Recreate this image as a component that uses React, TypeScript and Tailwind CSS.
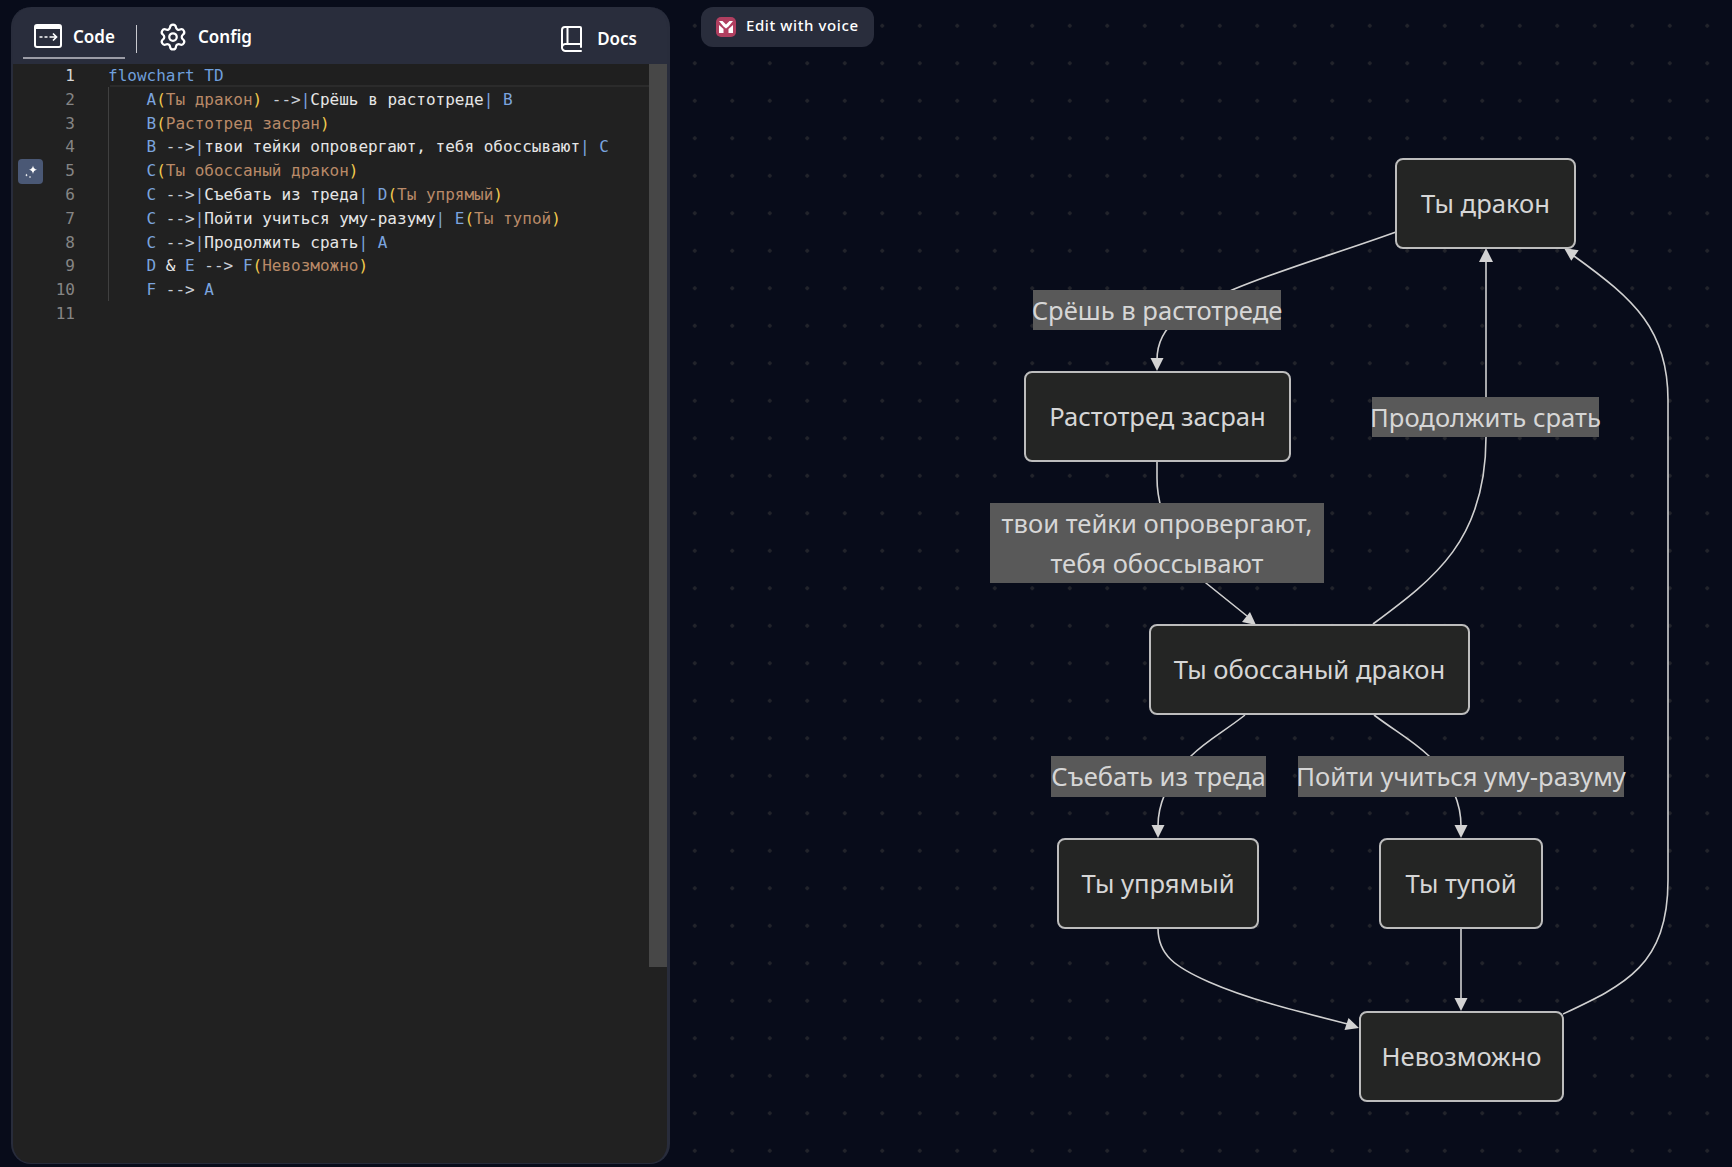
import React from 'react';
import { Settings } from 'lucide-react';

type Token = { t: string; c: 'kw' | 'id' | 'par' | 'str' | 'op' | 'lab' };

const tokenColors = {
  kw: 'text-[#6f9fdc]',
  id: 'text-[#7ba4de]',
  par: 'text-[#f1ca4e]',
  str: 'text-[#b98a68]',
  op: 'text-[#c9ced6]',
  lab: 'text-[#e6e6e6]',
};

const codeLines: Token[][] = [
  [{ t: 'flowchart TD', c: 'kw' }],
  [
    { t: '    A', c: 'id' }, { t: '(', c: 'par' }, { t: 'Ты дракон', c: 'str' }, { t: ')', c: 'par' },
    { t: ' -->', c: 'op' }, { t: '|', c: 'id' }, { t: 'Срёшь в растотреде', c: 'lab' }, { t: '|', c: 'id' }, { t: ' B', c: 'id' },
  ],
  [{ t: '    B', c: 'id' }, { t: '(', c: 'par' }, { t: 'Растотред засран', c: 'str' }, { t: ')', c: 'par' }],
  [
    { t: '    B', c: 'id' }, { t: ' -->', c: 'op' }, { t: '|', c: 'id' }, { t: 'твои тейки опровергают, тебя обоссывают', c: 'lab' },
    { t: '|', c: 'id' }, { t: ' C', c: 'id' },
  ],
  [{ t: '    C', c: 'id' }, { t: '(', c: 'par' }, { t: 'Ты обоссаный дракон', c: 'str' }, { t: ')', c: 'par' }],
  [
    { t: '    C', c: 'id' }, { t: ' -->', c: 'op' }, { t: '|', c: 'id' }, { t: 'Съебать из треда', c: 'lab' }, { t: '|', c: 'id' },
    { t: ' D', c: 'id' }, { t: '(', c: 'par' }, { t: 'Ты упрямый', c: 'str' }, { t: ')', c: 'par' },
  ],
  [
    { t: '    C', c: 'id' }, { t: ' -->', c: 'op' }, { t: '|', c: 'id' }, { t: 'Пойти учиться уму-разуму', c: 'lab' }, { t: '|', c: 'id' },
    { t: ' E', c: 'id' }, { t: '(', c: 'par' }, { t: 'Ты тупой', c: 'str' }, { t: ')', c: 'par' },
  ],
  [{ t: '    C', c: 'id' }, { t: ' -->', c: 'op' }, { t: '|', c: 'id' }, { t: 'Продолжить срать', c: 'lab' }, { t: '|', c: 'id' }, { t: ' A', c: 'id' }],
  [
    { t: '    D', c: 'id' }, { t: ' & ', c: 'lab' }, { t: 'E', c: 'id' }, { t: ' -->', c: 'op' }, { t: ' F', c: 'id' },
    { t: '(', c: 'par' }, { t: 'Невозможно', c: 'str' }, { t: ')', c: 'par' },
  ],
  [{ t: '    F', c: 'id' }, { t: ' -->', c: 'op' }, { t: ' A', c: 'id' }],
  [],
];

// boxes measured off the reference: x, y, w, h
const nodes = [
  { text: 'Ты дракон', x: 1395, y: 158, w: 181, h: 91 },
  { text: 'Растотред засран', x: 1024, y: 371, w: 267, h: 91 },
  { text: 'Ты обоссаный дракон', x: 1149, y: 624, w: 321, h: 91 },
  { text: 'Ты упрямый', x: 1057, y: 838, w: 202, h: 91 },
  { text: 'Ты тупой', x: 1379, y: 838, w: 164, h: 91 },
  { text: 'Невозможно', x: 1359, y: 1011, w: 205, h: 91 },
];

const edgeLabels = [
  { lines: ['Срёшь в растотреде'], x: 1033, y: 290, w: 248, h: 40 },
  { lines: ['Продолжить срать'], x: 1372, y: 397, w: 227, h: 40 },
  { lines: ['твои тейки опровергают,', 'тебя обоссывают'], x: 990, y: 503, w: 334, h: 80 },
  { lines: ['Съебать из треда'], x: 1051, y: 756, w: 215, h: 41 },
  { lines: ['Пойти учиться уму-разуму'], x: 1298, y: 756, w: 326, h: 41 },
];

const edges = [
  'M1396,232 C1335,254 1285,268 1232,290 C1190,308 1157,322 1157,360',
  'M1157,462 L1157,478 C1157,510 1170,540 1206,583 L1247,616',
  'M1373,624 C1435,578 1486,540 1486,437 L1486,260',
  'M1245,715 C1225,731 1207,740 1191,756 C1172,776 1158,800 1158,826',
  'M1374,715 C1395,731 1412,740 1429,756 C1448,776 1461,800 1461,826',
  'M1158,928 C1158,955 1175,967 1209,982 C1250,1000 1300,1012 1348,1024',
  'M1461,928 L1461,1000',
  'M1563,1014 C1625,985 1668,965 1668,880 L1668,400 C1668,330 1635,300 1574,256',
];

const arrows = [
  '1150.500,358 1163.500,358 1157,371',
  '1250,612 1256,625 1242,622',
  '1479,262 1493,262 1486,248',
  '1151.500,825 1164.500,825 1158,838',
  '1454.500,825 1467.500,825 1461,838',
  '1348.500,1018 1359,1028 1344.500,1030',
  '1454.500,998 1467.500,998 1461,1011',
  '1564,248 1578.700,250.200 1571.300,260.800',
];

const CodeIcon = () => (
  <svg width="28" height="24" viewBox="0 0 28 24" fill="none">
    <rect x="1" y="1" width="26" height="22" rx="2" stroke="#fff" strokeWidth="2" />
    <path d="M1 3.500h26" stroke="#fff" strokeWidth="3" />
    <path d="M5.500 13h3M10.500 13h3M15.500 13h6M19 9.500l3.500 3.500-3.500 3.500" stroke="#fff" strokeWidth="1.7" />
  </svg>
);

const BookIcon = () => (
  <svg width="22" height="26" viewBox="0 0 22 26" fill="none" stroke="#fff" strokeWidth="2" strokeLinejoin="round" strokeLinecap="round">
    <path d="M4 1h15a1 1 0 0 1 1 1v16H4.500A3.500 3.500 0 0 0 1 21.500V4a3 3 0 0 1 3-3Z" />
    <path d="M6.500 1.500V17.500" />
    <path d="M1 21.500A3.500 3.500 0 0 0 4.500 25H20" />
    <path d="M20 18v3" />
  </svg>
);

const SparkleIcon = () => (
  <svg width="16" height="16" viewBox="0 0 16 16" fill="#fff">
    <path d="M10 1.500c.5 2.600 1.400 3.600 4 4.200-2.600.6-3.500 1.600-4 4.200-.5-2.600-1.500-3.600-4-4.200 2.500-.6 3.500-1.600 4-4.200Z" />
    <path d="M3.500 9.500c.2 1 .6 1.400 1.500 1.600-.9.2-1.300.6-1.500 1.600-.2-1-.6-1.400-1.500-1.600.9-.2 1.300-.6 1.500-1.600Z" />
    <circle cx="7" cy="13" r="0.8" />
  </svg>
);

const VoiceLogo = () => (
  <div className="flex h-5 w-5 items-center justify-center rounded-[5px] bg-[#b03f60]">
    <svg width="14" height="12" viewBox="0 0 14 12" fill="#fff">
      <path d="M0 0h3.500L7 3.500 10.500 0H14L9.500 5.500 7 7.500 4.500 5.500Z" />
      <path d="M0 4l4.500 4v4H0ZM14 4l-4.500 4v4H14Z" />
    </svg>
  </div>
);

const App: React.FC = () => {
  return (
    <div className="relative flex h-[1167px] w-[1732px] items-start overflow-hidden bg-[#080c1a] bg-[radial-gradient(circle,#22242b_2px,transparent_2px)] bg-[length:37.5px_37.5px] bg-[position:1px_7px] font-['Noto_Sans',sans-serif]">
      {/* editor panel */}
      <div className="mt-[7px] ml-[11px] flex h-[1157px] w-[659px] flex-col overflow-hidden rounded-[20px] border-r-[3px] border-b border-l-2 border-[#282c3b] bg-[#292d3c]">
        <div className="flex h-[57px] shrink-0 items-start text-white">
          <div className="mt-[10px] ml-[10px] flex h-[42px] w-[102px] items-center gap-[11px] border-b-2 border-[#9b9ca6] pb-[2px] pl-[11px]">
            <CodeIcon />
            <span className="text-[17px] leading-none font-semibold">Code</span>
          </div>
          <div className="mt-[18px] ml-[11px] h-[28px] w-px bg-[#c8c9cf]" />
          <div className="mt-[15px] ml-[21px] flex items-center gap-[10px]">
            <Settings size={30} strokeWidth={1.8} />
            <span className="text-[17px] leading-[26px] font-semibold">Config</span>
          </div>
          <div className="mt-[19px] mr-[30px] ml-auto flex items-center gap-[14px]">
            <BookIcon />
            <span className="text-[17px] leading-[26px] font-semibold">Docs</span>
          </div>
        </div>

        <div className="relative flex-1 bg-[#212121] font-['DejaVu_Sans_Mono',monospace] text-[16px]">
          <div className="absolute top-0 right-0 left-[97px] h-[23px] border-b-2 border-[#2b2b2b] bg-[#1f1f1f]" />
          <div className="absolute top-[23px] left-[95px] h-[214px] w-px bg-[#404040]" />
          {codeLines.map((tokens, i) => (
            <div key={i} className="relative flex h-[23.8px] items-center leading-[23.8px]">
              <span className={`w-[62px] text-right ${i === 0 ? 'text-[#d6d6d6]' : 'text-[#858585]'}`}>{i + 1}</span>
              <span className="ml-[33px] whitespace-pre">
                {tokens.map((tok, j) => (
                  <span key={j} className={tokenColors[tok.c]}>{tok.t}</span>
                ))}
              </span>
            </div>
          ))}
          <div className="absolute top-[95px] left-[5px] flex h-[25px] w-[25px] items-center justify-center rounded-[4px] bg-[#4a5875]">
            <SparkleIcon />
          </div>
          <div className="absolute top-0 right-0 h-[903px] w-[18px] bg-[#474747]" />
        </div>
      </div>

      <div className="mt-[7px] ml-[31px] flex h-10 w-[173px] items-center gap-[10px] rounded-xl bg-[#292d3c] pl-[15px] text-[15px] font-medium tracking-[0.6px] text-white">
        <VoiceLogo />
        <span className="pb-[4px]">Edit with voice</span>
      </div>

      {/* diagram: free canvas */}
      <svg className="absolute top-0 left-0" width="1732" height="1167" fill="none">
        {edges.map((d, i) => (
          <path key={i} d={d} stroke="#d0d0d0" strokeWidth="1.6" />
        ))}
        {arrows.map((p, i) => (
          <polygon key={i} points={p} fill="#d3d3d3" />
        ))}
      </svg>
      {nodes.map(n => (
        <div
          key={n.text}
          className="absolute flex items-center justify-center rounded-[8px] border-2 border-[#bdbdbd] bg-[#242524] pt-[1px] font-['Noto_Sans',sans-serif] text-[25.6px] text-[#d6d6d6]"
          style={{ left: n.x, top: n.y, width: n.w, height: n.h }}
        >
          {n.text}
        </div>
      ))}
      {edgeLabels.map(l => (
        <div
          key={l.lines[0]}
          className="absolute flex flex-col items-center justify-center bg-[#595959] pt-[1px] font-['Noto_Sans',sans-serif] text-[25.6px] leading-[40px] whitespace-nowrap text-[#d6d6d6]"
          style={{ left: l.x, top: l.y, width: l.w, height: l.h }}
        >
          {l.lines.map(s => (
            <span key={s}>{s}</span>
          ))}
        </div>
      ))}
    </div>
  );
};

export default App;
